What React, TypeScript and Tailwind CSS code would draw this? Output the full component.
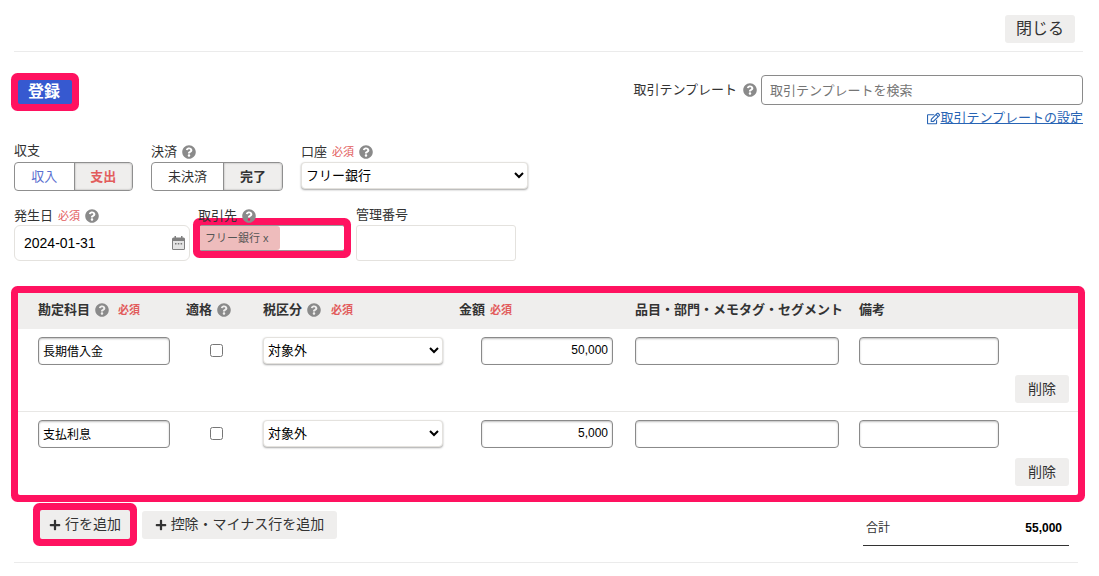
import React from "react";
import { FaQuestionCircle, FaPlus, FaRegEdit } from "react-icons/fa";

const FONT = "font-['Liberation_Sans','Noto_Sans_CJK_JP',sans-serif]";

function Help({ className = "" }: { className?: string }) {
  return <FaQuestionCircle className={`inline-block text-[14px] text-[#8a8a8a] ${className}`} />;
}

function Req({ className = "" }: { className?: string }) {
  return <span className={`text-[11px] text-[#e25c5c] ${className}`}>必須</span>;
}

function Calendar() {
  return (
    <svg viewBox="0 0 13 14" className="h-[14px] w-[13px] shrink-0" aria-hidden="true">
      <rect x="2.5" y="0" width="1.5" height="3" fill="#808080" />
      <rect x="9" y="0" width="1.5" height="3" fill="#808080" />
      <rect x="0" y="1.5" width="13" height="12.5" rx="1.5" fill="#808080" />
      <rect x="1" y="5" width="11" height="8" fill="#e4e4e4" />
      <rect x="3" y="7" width="1.5" height="1.5" fill="#777" />
      <rect x="5.8" y="7" width="1.5" height="1.5" fill="#777" />
      <rect x="8.6" y="7" width="1.5" height="1.5" fill="#777" />
    </svg>
  );
}

function Toggle({ items, widths }: { items: { t: string; cls: string; on?: boolean }[]; widths: string[] }) {
  return (
    <div className="flex h-[29px] rounded-[4px] border border-[#8f8f8f]">
      {items.map((it, i) => (
        <div
          key={it.t}
          className={`flex items-center justify-center text-[13px] ${widths[i]} ${it.cls} ${
            it.on
              ? "rounded-r-[3px] border-l border-[#8f8f8f] bg-[#efeeed] font-bold shadow-[inset_0_0_2px_rgba(0,0,0,0.35)]"
              : ""
          }`}
        >
          {it.t}
        </div>
      ))}
    </div>
  );
}

function NativeSelect({ w, value }: { w: string; value: string }) {
  return (
    <select
      defaultValue={value}
      className={`h-[27px] ${w} rounded-[4px] border border-[#e4e2de] bg-white text-[13px] text-black shadow-[0_1px_2px_rgba(0,0,0,0.35)] outline-none [appearance:auto]`}
    >
      <option>{value}</option>
    </select>
  );
}

function TableInput({ w, value = "", right = false }: { w: string; value?: string; right?: boolean }) {
  return (
    <input
      readOnly
      value={value}
      className={`h-[28px] ${w} rounded-[4px] border border-[#8a8a8a] bg-white px-[4px] pb-[2px] text-[12px] text-black shadow-[inset_0_1px_2px_rgba(0,0,0,0.25)] outline-none ${
        right ? "text-right" : ""
      }`}
    />
  );
}

function Th({ children, className = "" }: { children: React.ReactNode; className?: string }) {
  return <div className={`flex items-center pb-[2px] text-[13px] font-bold text-[#333] ${className}`}>{children}</div>;
}

function Row({ account, amount, border }: { account: string; amount: string; border?: boolean }) {
  return (
    <div className={`${border ? "border-b border-[#e8e7e5] pb-[8px]" : "pb-[9px]"} pt-[8px]`}>
      <div className="grid grid-cols-[148px_77px_196px_176px_224px_1fr] items-start pl-[20px]">
        <TableInput w="w-[132px]" value={account} />
        <div className="flex h-[26px] items-center pl-[24px]">
          <input type="checkbox" readOnly className="h-[13px] w-[13px] [appearance:auto]" />
        </div>
        <NativeSelect w="w-[180px]" value="対象外" />
        <div className="pl-[22px]">
          <TableInput w="w-[132px]" value={amount} right />
        </div>
        <TableInput w="w-[204px]" />
        <TableInput w="w-[140px]" />
      </div>
      <div className="mt-[10px] flex justify-end pr-[9px]">
        <button className="h-[28px] w-[54px] rounded-[3px] bg-[#efeeed] text-[14px] text-[#333]">削除</button>
      </div>
    </div>
  );
}

export default function App() {
  return (
    <div className={`h-[576px] w-[1099px] overflow-hidden bg-white pl-[14px] pr-[16px] text-[13px] text-[#333] ${FONT}`}>
      <div className="flex justify-end border-b border-[#ebebeb] pb-[8px] pr-[8px] pt-[15px]">
        <button className="h-[28px] w-[70px] rounded-[3px] bg-[#efeeed] text-[16px] text-[#333]">閉じる</button>
      </div>

      <div className="flex items-start justify-between">
        <button className="ml-[4px] mt-[28px] h-[24px] w-[54px] rounded-[2px] bg-[#3659d0] pr-[2px] text-[16px] font-bold text-white ring-[7px] ring-[#ff1260]">
          登録
        </button>
        <div className="mt-[23px] flex flex-col items-end">
          <div className="flex items-center">
            <span>取引テンプレート</span>
            <Help className="ml-[6px]" />
            <input
              readOnly
              placeholder="取引テンプレートを検索"
              className="ml-[4px] h-[30px] w-[322px] rounded-[4px] border border-[#8a8a8a] bg-white px-[8px] text-[13px] outline-none placeholder:text-[#757575]"
            />
          </div>
          <a className="mt-[5px] flex items-center text-[13px] leading-[16px] text-[#2864b4] underline">
            <FaRegEdit className="text-[13px]" />
            取引テンプレートの設定
          </a>
        </div>
      </div>

      <div className="mt-[16px] flex items-start">
        <div className="w-[137px]">
          <div className="h-[20px] leading-[18px]">収支</div>
          <div className="w-[119px]">
            <Toggle
              widths={["w-[59px]", "w-[59px]"]}
              items={[
                { t: "収入", cls: "text-[#5a6fd0]" },
                { t: "支出", cls: "text-[#e25c5c]", on: true },
              ]}
            />
          </div>
        </div>
        <div className="w-[150px]">
          <div className="flex h-[20px] items-center gap-[5px] leading-[18px]">
            決済
            <Help />
          </div>
          <div className="w-[132px]">
            <Toggle
              widths={["w-[71px]", "w-[59px]"]}
              items={[
                { t: "未決済", cls: "text-[#333]" },
                { t: "完了", cls: "text-[#333]", on: true },
              ]}
            />
          </div>
        </div>
        <div>
          <div className="flex h-[20px] items-center gap-[5px] leading-[18px]">
            口座
            <Req />
            <Help />
          </div>
          <NativeSelect w="w-[227px]" value="フリー銀行" />
        </div>
      </div>

      <div className="mt-[15px] flex items-start">
        <div className="w-[184px]">
          <div className="flex h-[19px] items-center gap-[5px] leading-[18px]">
            発生日
            <Req />
            <Help />
          </div>
          <div className="flex h-[36px] w-[176px] items-center justify-between rounded-[6px] border border-[#e4e2de] pl-[9px] pr-[4px] text-[14px] text-black">
            2024-01-31
            <Calendar />
          </div>
        </div>
        <div className="w-[158px]">
          <div className="flex h-[19px] items-center gap-[5px] leading-[18px]">
            取引先
            <Help />
          </div>
          <div className="ml-[2px] flex h-[26px] w-[144px] items-center rounded-[2px] border-y border-[#999] bg-white ring-[7px] ring-[#ff1260]">
            <span className="flex h-[24px] w-[80px] items-center rounded-r-[3px] bg-[#eebcbc] pl-[5px] text-[11px] text-[#555]">
              フリー銀行 x
            </span>
          </div>
        </div>
        <div>
          <div className="h-[19px] leading-[18px]">管理番号</div>
          <div className="h-[36px] w-[160px] rounded-[3px] border border-[#e4e2de]" />
        </div>
      </div>

      <div className="ml-[4px] mt-[32px] w-[1060px] rounded-[2px] bg-white ring-[7px] ring-[#ff1260]">
        <div className="grid h-[36px] grid-cols-[148px_77px_196px_176px_224px_1fr] items-center bg-[#efeeed] pl-[20px]">
          <Th className="gap-[5px]">
            勘定科目
            <Help />
            <Req className="ml-[4px]" />
          </Th>
          <Th className="gap-[5px]">
            適格
            <Help />
          </Th>
          <Th className="gap-[5px]">
            税区分
            <Help />
            <Req className="ml-[5px]" />
          </Th>
          <Th className="gap-[5px]">
            金額
            <Req />
          </Th>
          <Th className="whitespace-nowrap">品目・部門・メモタグ・セグメント</Th>
          <Th>備考</Th>
        </div>
        <Row account="長期借入金" amount="50,000" border />
        <Row account="支払利息" amount="5,000" />
      </div>

      <div className="mr-[5px] flex items-start border-b border-[#ebebeb] pb-[16px]">
        <div className="ml-[26px] mt-[15px] flex items-center gap-[12px]">
          <button className="flex h-[29px] w-[90px] items-center justify-center gap-[4px] rounded-[2px] bg-[#efeeed] text-[14px] text-[#333] ring-[7px] ring-[#ff1260]">
            <FaPlus className="text-[12px]" />
            行を追加
          </button>
          <button className="flex h-[28px] w-[195px] items-center justify-center gap-[4px] rounded-[3px] bg-[#efeeed] text-[14px] text-[#333]">
            <FaPlus className="text-[12px]" />
            控除・マイナス行を追加
          </button>
        </div>
        <div className="ml-auto mr-[9px] mt-[16px] flex h-[35px] w-[206px] items-center justify-between border-b border-[#333] pl-[3px] pr-[7px] text-[12px]">
          <span>合計</span>
          <span className="font-bold text-black">55,000</span>
        </div>
      </div>
    </div>
  );
}
